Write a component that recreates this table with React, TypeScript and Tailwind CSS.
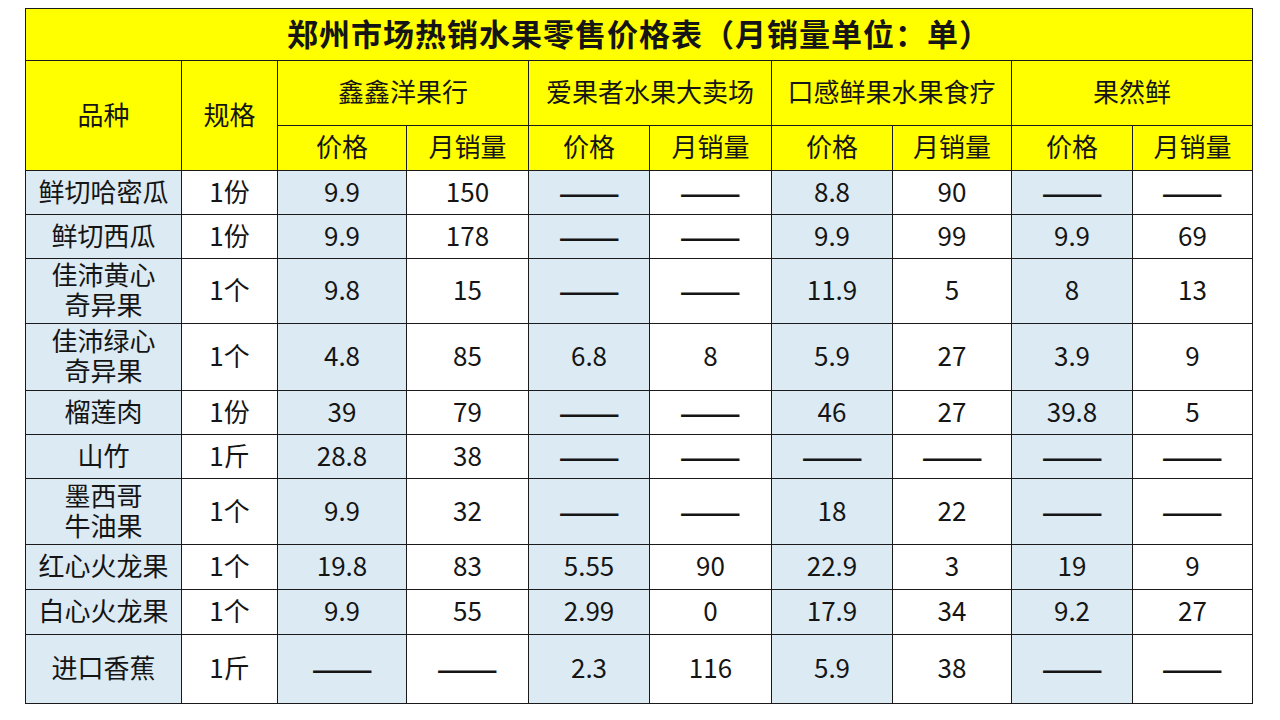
const shops = ["鑫鑫洋果行", "爱果者水果大卖场", "口感鲜果水果食疗", "果然鲜"];

const D = "——";

type Row = { name: string[]; spec: string; vals: string[]; h: string };

const rows: Row[] = [
  { name: ["鲜切哈密瓜"], spec: "1份", vals: ["9.9", "150", D, D, "8.8", "90", D, D], h: "h-[44px]" },
  { name: ["鲜切西瓜"], spec: "1份", vals: ["9.9", "178", D, D, "9.9", "99", "9.9", "69"], h: "h-[44px]" },
  { name: ["佳沛黄心", "奇异果"], spec: "1个", vals: ["9.8", "15", D, D, "11.9", "5", "8", "13"], h: "h-[65px]" },
  { name: ["佳沛绿心", "奇异果"], spec: "1个", vals: ["4.8", "85", "6.8", "8", "5.9", "27", "3.9", "9"], h: "h-[67px]" },
  { name: ["榴莲肉"], spec: "1份", vals: ["39", "79", D, D, "46", "27", "39.8", "5"], h: "h-[44px]" },
  { name: ["山竹"], spec: "1斤", vals: ["28.8", "38", D, D, D, D, D, D], h: "h-[44px]" },
  { name: ["墨西哥", "牛油果"], spec: "1个", vals: ["9.9", "32", D, D, "18", "22", D, D], h: "h-[66px]" },
  { name: ["红心火龙果"], spec: "1个", vals: ["19.8", "83", "5.55", "90", "22.9", "3", "19", "9"], h: "h-[45px]" },
  { name: ["白心火龙果"], spec: "1个", vals: ["9.9", "55", "2.99", "0", "17.9", "34", "9.2", "27"], h: "h-[45px]" },
  { name: ["进口香蕉"], spec: "1斤", vals: [D, D, "2.3", "116", "5.9", "38", D, D], h: "h-[69px]" },
];

// shared cell look: thin dark grid, centered, text nudged up a little
const cell = "border border-[#1a1a1a] text-center align-middle px-0 pt-0 pb-[4px]";

export default function App() {
  return (
    <div className="w-[1280px] h-[720px] bg-white pt-[8px] pl-[25px] overflow-hidden font-['Noto_Sans_CJK_SC','Microsoft_YaHei',sans-serif] text-[#151515]">
      <table className="border-collapse table-fixed w-[1227px] text-[26px] leading-[30px]">
        <colgroup>
          <col className="w-[156px]" />
          <col className="w-[96px]" />
          <col className="w-[129px]" />
          <col className="w-[122px]" />
          <col className="w-[121px]" />
          <col className="w-[122px]" />
          <col className="w-[121px]" />
          <col className="w-[119px]" />
          <col className="w-[121px]" />
          <col className="w-[120px]" />
        </colgroup>
        <tbody>
          <tr className="h-[52px] bg-[#ffff00]">
            <td colSpan={10} className={`${cell} text-[31px] font-bold tracking-[1px]`}>
              郑州市场热销水果零售价格表（月销量单位：单）
            </td>
          </tr>
          <tr className="h-[65px] bg-[#ffff00]">
            <td rowSpan={2} className={cell}>品种</td>
            <td rowSpan={2} className={cell}>规格</td>
            {shops.map((s) => (
              <td key={s} colSpan={2} className={cell}>{s}</td>
            ))}
          </tr>
          <tr className="h-[45px] bg-[#ffff00]">
            {shops.map((s) => (
              <>
                <td key={s + "p"} className={cell}>价格</td>
                <td key={s + "m"} className={cell}>月销量</td>
              </>
            ))}
          </tr>
          {rows.map((r) => (
            <tr key={r.name.join("")} className={r.h}>
              <td className={`${cell} bg-[#dceaf3]`}>
                {r.name.map((n) => (
                  <div key={n}>{n}</div>
                ))}
              </td>
              <td className={`${cell} bg-white`}>{r.spec}</td>
              {r.vals.map((v, i) => (
                <td key={i} className={`${cell} ${i % 2 === 0 ? "bg-[#dceaf3]" : "bg-white"}`}>
                  {v === D ? (
                    <span className="inline-block font-bold translate-y-[1px] scale-x-[1.4]">{D}</span>
                  ) : (
                    v
                  )}
                </td>
              ))}
            </tr>
          ))}
        </tbody>
      </table>
    </div>
  );
}
